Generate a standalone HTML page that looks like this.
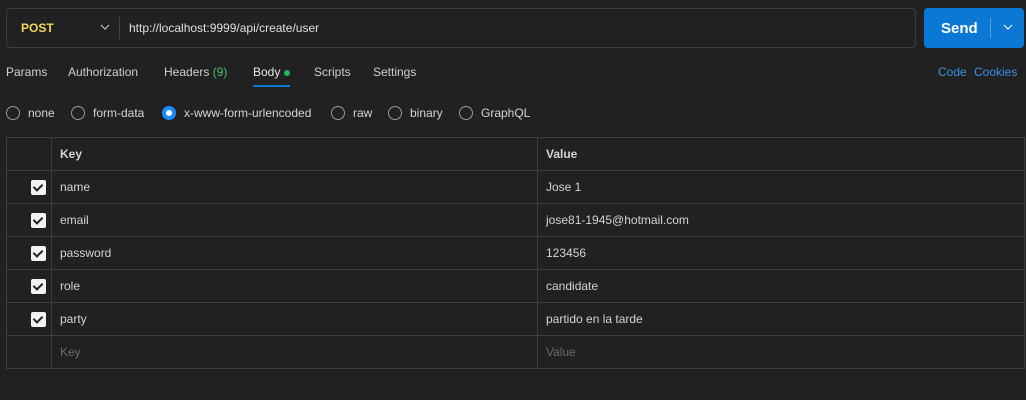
<!DOCTYPE html><html><head><style>
body{margin:0;width:1026px;height:400px;background:#212121;font-family:"Liberation Sans",sans-serif;color:#d4d4d4;font-size:12px;position:relative;overflow:hidden}
.a{position:absolute}
.url{left:6px;top:8px;width:908px;height:38px;border:1px solid #3d3d3d;border-radius:4px}
.send{left:924px;top:8px;width:100px;height:40px;background:#0b78d3;border-radius:4px;color:#fff}
.tab{top:65px;font-size:12px;color:#cfcfcf}
.rad{top:106px;width:12px;height:12px;border:1px solid #9a9a9a;border-radius:50%}
.rl{top:106px}
table{position:absolute;left:6px;top:137px;border-collapse:collapse;width:1019px;table-layout:fixed}
td{border:1px solid #3d3d3d;height:32px;padding:0 0 0 8px;font-size:12px;color:#d4d4d4}
td.c{padding:0;text-align:left}
.cb{display:inline-block;width:15px;height:15px;background:#f2f2f2;border-radius:2px;position:relative;top:2px;left:24px}
.cb:after{content:"";position:absolute;left:4px;top:2px;width:4px;height:7px;border:solid #222;border-width:0 2px 2px 0;transform:rotate(45deg)}
</style></head><body>
<div class="a url"></div>
<div class="a" style="left:21px;top:21px;color:#f5d75e;font-weight:bold;font-size:12px">POST</div>
<svg class="a" style="left:100px;top:24px" width="10" height="7"><path d="M1 1l4 4 4-4" stroke="#bbb" fill="none" stroke-width="1.2"/></svg>
<div class="a" style="left:119px;top:17px;width:1px;height:22px;background:#444"></div>
<div class="a" style="left:129px;top:21px;color:#e0e0e0">http://localhost:9999/api/create/user</div>
<div class="a send"><span class="a" style="left:17px;top:12px;font-weight:bold;font-size:15px">Send</span><div class="a" style="left:66px;top:10px;width:1px;height:20px;background:#5aa0e0"></div><svg class="a" style="left:79px;top:16px" width="10" height="7"><path d="M1 1l4 4 4-4" stroke="#fff" fill="none" stroke-width="1.2"/></svg></div>
<div class="a tab" style="left:6px">Params</div>
<div class="a tab" style="left:68px">Authorization</div>
<div class="a tab" style="left:164px">Headers <span style="color:#4bbf6b">(9)</span></div>
<div class="a tab" style="left:253px;color:#e8e8e8">Body</div>
<div class="a" style="left:284px;top:70px;width:6px;height:6px;border-radius:50%;background:#1fb957"></div>
<div class="a" style="left:253px;top:85px;width:37px;height:2px;background:#0b78d3"></div>
<div class="a tab" style="left:314px">Scripts</div>
<div class="a tab" style="left:373px">Settings</div>
<div class="a tab" style="left:938px;color:#3d8ee8">Code</div>
<div class="a tab" style="left:974px;color:#3d8ee8">Cookies</div>
<div class="a rad" style="left:6px"></div><div class="a rl" style="left:28px">none</div>
<div class="a rad" style="left:71px"></div><div class="a rl" style="left:93px">form-data</div>
<div class="a rad" style="left:162px;border:4px solid #1a8cff;width:6px;height:6px;background:#fff"></div><div class="a rl" style="left:184px">x-www-form-urlencoded</div>
<div class="a rad" style="left:331px"></div><div class="a rl" style="left:353px">raw</div>
<div class="a rad" style="left:388px"></div><div class="a rl" style="left:410px">binary</div>
<div class="a rad" style="left:459px"></div><div class="a rl" style="left:481px">GraphQL</div>
<table>
<colgroup><col style="width:45px"><col style="width:486px"><col></colgroup>
<tr><td class="c"></td><td style="font-weight:bold">Key</td><td style="font-weight:bold">Value</td></tr>
<tr><td class="c"><span class="cb"></span></td><td>name</td><td>Jose 1</td></tr>
<tr><td class="c"><span class="cb"></span></td><td>email</td><td>jose81-1945@hotmail.com</td></tr>
<tr><td class="c"><span class="cb"></span></td><td>password</td><td>123456</td></tr>
<tr><td class="c"><span class="cb"></span></td><td>role</td><td>candidate</td></tr>
<tr><td class="c"><span class="cb"></span></td><td>party</td><td>partido en la tarde</td></tr>
<tr><td class="c"></td><td style="color:#6a6a6a">Key</td><td style="color:#6a6a6a">Value</td></tr>
</table>
</body></html>
